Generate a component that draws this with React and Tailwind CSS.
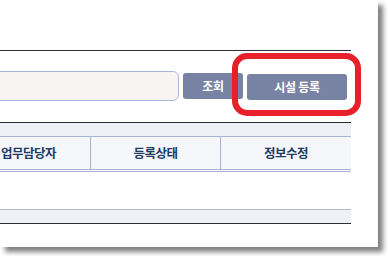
export default function App() {
  const font = { fontFamily: '"Noto Sans CJK KR", "Noto Sans", sans-serif' };

  return (
    <div className="w-[388px] h-[256px] bg-white overflow-hidden" style={font}>
      <div className="w-[378px] h-[247px] bg-white shadow-[5px_5px_5px_rgba(0,0,0,0.5)] overflow-hidden">
        <div className="w-[351px] pt-[50px]">
          <div className="h-px bg-[#2e2e36]" />

          {/* search row */}
          <div className="flex items-center h-[71px] pb-[1px]">
            <div className="-ml-[12px] w-[191px] h-[30px] rounded-[6px] border border-[#aab6dc] bg-[#f7f4f2]" />
            <button className="ml-[4px] w-[60px] h-[26px] rounded-[3px] bg-[#7883a3] text-white text-[12px] font-bold tracking-[-0.3px]">
              조회
            </button>
            <div className="relative ml-[4px]">
              <button className="w-[100px] h-[26px] rounded-[3px] bg-[#7883a3] text-white text-[12px] font-bold tracking-[-0.3px]">
                시설 등록
              </button>
              <div className="absolute -left-[15px] -top-[20px] w-[129px] h-[63px] rounded-[15px] border-[6px] border-[#e8202a]" />
            </div>
          </div>

          <div className="h-px bg-[#2e2e36]" />
          <div className="h-[13px] bg-[#eef1f6]" />

          {/* table header */}
          <div className="border-t border-[#a9b4d3] bg-[#f5f7fa] overflow-hidden">
            <div className="flex h-[32px] text-[12.5px] font-bold text-[#1d3b63] tracking-[-0.5px]">
              <div className="w-[91px] flex items-center pl-px border-r border-[#a9b4d3]">업무담당자</div>
              <div className="w-[130px] flex items-center justify-center border-r border-[#a9b4d3]">등록상태</div>
              <div className="w-[130px] flex items-center justify-center">정보수정</div>
            </div>
          </div>
          <div className="h-[3px] border-t border-b border-[#a9b4d3] bg-white" />

          {/* empty body */}
          <div className="h-[37px] bg-white" />
          <div className="h-[14px] border-t border-[#b3bbd3] bg-[#eef1f6]" />
          <div className="h-px bg-[#2e2e36]" />
        </div>
      </div>
    </div>
  );
}
